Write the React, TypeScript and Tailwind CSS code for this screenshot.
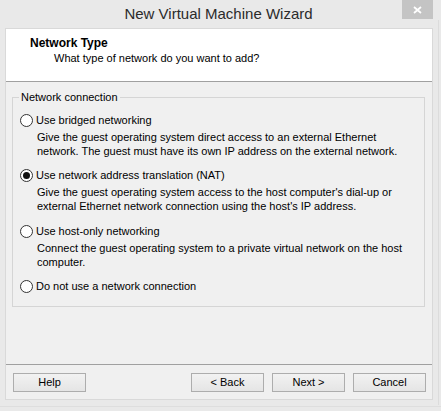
import { useState } from 'react'

type Option = {
  id: string
  label: string
  lines: string[]
  gap: string
}

const options: Option[] = [
  {
    id: 'bridged',
    label: 'Use bridged networking',
    lines: [
      'Give the guest operating system direct access to an external Ethernet',
      'network. The guest must have its own IP address on the external network.',
    ],
    gap: 'mt-0',
  },
  {
    id: 'nat',
    label: 'Use network address translation (NAT)',
    lines: [
      "Give the guest operating system access to the host computer's dial-up or",
      "external Ethernet network connection using the host's IP address.",
    ],
    gap: 'mt-[10px]',
  },
  {
    id: 'hostonly',
    label: 'Use host-only networking',
    lines: [
      'Connect the guest operating system to a private virtual network on the host',
      'computer.',
    ],
    gap: 'mt-[11px]',
  },
  {
    id: 'none',
    label: 'Do not use a network connection',
    lines: [],
    gap: 'mt-[10px]',
  },
]

function Radio({ checked }: { checked: boolean }) {
  return (
    <span className="w-[13px] h-[13px] rounded-full border border-[#333] bg-white flex items-center justify-center shrink-0">
      {checked && <span className="w-[7px] h-[7px] rounded-full bg-[#111]" />}
    </span>
  )
}

function WinButton({ children }: { children: React.ReactNode }) {
  return (
    <button className="w-[73px] h-[19px] border border-[#adadad] bg-gradient-to-b from-[#f2f2f2] to-[#e5e5e5] text-[11px] leading-[17px] text-black">
      {children}
    </button>
  )
}

export default function App() {
  const [selected, setSelected] = useState('nat')

  return (
    <div
      className="relative w-[441px] h-[411px] bg-[#e9e9e9] overflow-hidden text-black"
      style={{ fontFamily: '"Liberation Sans", Arial, sans-serif' }}
    >
      {/* 타이틀 바 */}
      <div className="h-[28px] flex justify-center pr-[4px] text-[15px] leading-[28px] text-[#2b2b2b]">
        New Virtual Machine Wizard
      </div>
      <button className="absolute top-0 left-[402px] w-[31px] h-[19px] bg-[#c4c4c4] flex items-center justify-center">
        <svg width="9" height="8" viewBox="0 0 9 8">
          <path d="M1 1 L8 7 M8 1 L1 7" stroke="#fff" strokeWidth="1.8" />
        </svg>
      </button>
      <div className="absolute top-[20px] bottom-[6px] left-[438px] w-px bg-[#dcdcdc]" />

      {/* 클라이언트 영역 */}
      <div className="ml-[5px] w-[428px] h-[372px] border border-[#d9d9d9] bg-[#f0f0f0] flex flex-col">
        {/* 헤더 */}
        <div className="h-[53px] bg-white border-b border-[#a0a0a0] pt-[7px]">
          <p className="pl-[24px] text-[12px] leading-[14px] font-bold">Network Type</p>
          <p className="pl-[48px] mt-[1px] text-[11px] leading-[14px]">
            What type of network do you want to add?
          </p>
        </div>

        {/* 그룹 박스 */}
        <div className="relative mt-[15px] ml-[6px] w-[413px] h-[210px] border border-[#d5d5d5] pt-[15px] pl-[7px] text-[11px] leading-[14px]">
          <span className="absolute -top-[8px] left-[6px] px-[2px] bg-[#f0f0f0]">Network connection</span>
          {options.map(o => (
            <div key={o.id} className={o.gap}>
              <label className="flex items-center gap-[3px] h-[14px]" onClick={() => setSelected(o.id)}>
                <Radio checked={selected === o.id} />
                <span>{o.label}</span>
              </label>
              {o.lines.length > 0 && (
                <div className="pl-[17px] mt-[3px]">
                  {o.lines.map(l => (
                    <p key={l} className="whitespace-nowrap">{l}</p>
                  ))}
                </div>
              )}
            </div>
          ))}
        </div>

        {/* 하단 구분선 + 버튼 */}
        <div className="mt-[57px] h-px bg-[#a0a0a0]" />
        <div className="mt-[8px] flex pl-[7px] pr-[6px]">
          <WinButton>Help</WinButton>
          <div className="flex-1" />
          <div className="flex gap-[8px]">
            <WinButton>&lt; Back</WinButton>
            <WinButton>Next &gt;</WinButton>
            <WinButton>Cancel</WinButton>
          </div>
        </div>
      </div>
      <div className="absolute left-0 right-0 top-[406px] h-px bg-[#dedede]" />
    </div>
  )
}
